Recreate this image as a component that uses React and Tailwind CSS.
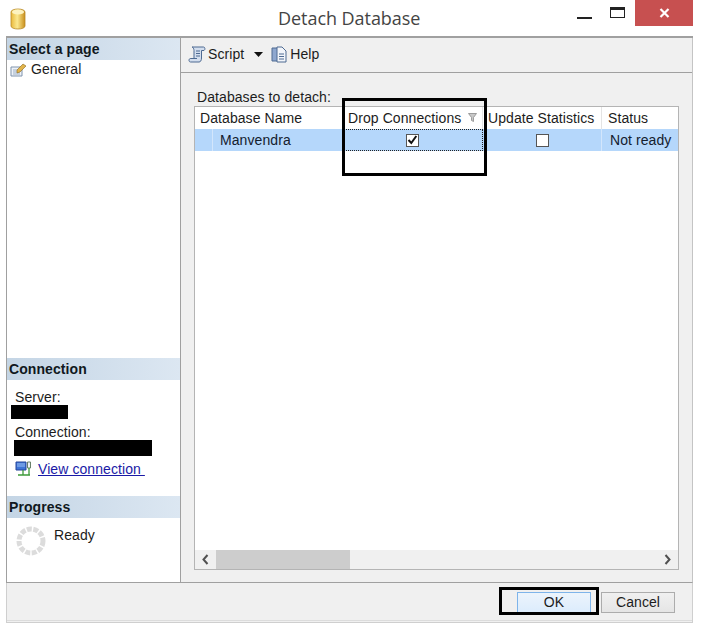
import React from "react";

const font = { fontFamily: '"Liberation Sans", Arial, sans-serif' };

const SectionHead = ({ children }) => (
  <div className="h-[22px] flex items-center pl-[2px] text-[14px] font-bold text-[#101820] bg-gradient-to-r from-[#c4d5e5] to-[#dce7f2]">
    {children}
  </div>
);

const DbIcon = () => (
  <svg width="16" height="22" viewBox="0 0 16 22">
    <defs>
      <linearGradient id="db" x1="0" x2="1" y1="0" y2="0">
        <stop offset="0" stopColor="#e9b93c" />
        <stop offset="0.45" stopColor="#fbe88e" />
        <stop offset="1" stopColor="#c98f1c" />
      </linearGradient>
    </defs>
    <path d="M1 4c0-4 14-4 14 0v14c0 4-14 4-14 0z" fill="url(#db)" stroke="#b98a2a" strokeWidth="0.8" />
    <ellipse cx="8" cy="4" rx="6" ry="2.4" fill="#fdf3c0" />
  </svg>
);

const PageIcon = () => (
  <svg width="17" height="15" viewBox="0 0 17 15">
    <path d="M1 5h11v9H1z" fill="#eef2f8" stroke="#7e93ad" />
    <path d="M3 8h7M3 10h7M3 12h7" stroke="#9db0c6" />
    <path d="M7 8l6-6 3 2-6 6-3 1z" fill="#e2b44a" stroke="#8a6a20" strokeWidth="0.6" />
  </svg>
);

const ScriptIcon = () => (
  <svg width="18" height="17" viewBox="0 0 18 17" fill="#d3deee" stroke="#4e6a92">
    <path d="M4 1h11.500c1.500 0 2 2.500 0.500 3.500H13.500V12c0 2.500-1 4-2.500 4H2.500C0.500 16 0.500 12.500 2.500 12.500H6V4.500C6 3 5 1 4 1z" />
    <path d="M8 5h4M8 7.500h4M8 10h4M2.500 12.500h6.500" fill="none" />
  </svg>
);

const HelpIcon = () => (
  <svg width="16" height="17" viewBox="0 0 16 17">
    <path d="M1 2h6v13H1z" fill="#8ea7cf" stroke="#4e6a92" />
    <path d="M6 1h5l4 4v11H6z" fill="#f2f5fa" stroke="#4e6a92" />
    <path d="M8 8h5M8 10.500h5M8 13h5" stroke="#4e6a92" />
  </svg>
);

const ConnIcon = () => (
  <svg width="17" height="16" viewBox="0 0 17 16">
    <path d="M1 1h10v8H1z" fill="#3f74d6" stroke="#25459a" />
    <path d="M2 3h8M2 5h8" stroke="#9cc0f2" />
    <path d="M12.500 1h3v6h-3z" fill="#eef2f6" stroke="#68806a" />
    <path d="M3 14h12M8 9v5M14 7v7" stroke="#3e9a3a" strokeWidth="1.3" fill="none" />
  </svg>
);

const Spinner = () => (
  <svg width="30" height="30" viewBox="0 0 30 30" fill="none">
    <circle cx="15" cy="15" r="12" stroke="#dcdcdc" strokeWidth="5" strokeDasharray="5 1.500" />
  </svg>
);

export default function App() {
  return (
    <div className="relative w-[703px] h-[625px] overflow-hidden bg-white text-[14px] tracking-[0.08px] text-[#1c1c1c]" style={font}>
      {/* title bar */}
      <div className="h-[36px] flex items-start">
        <div className="ml-[10px] mt-[8px]">
          <DbIcon />
        </div>
        <div
          className="ml-[252px] mt-[6px] w-[142px] whitespace-nowrap text-[18px] leading-[24px] tracking-[-0.05px] text-[#444]"
          style={{ fontFamily: '"Open Sans", sans-serif' }}
        >
          Detach Database
        </div>
        <div className="ml-[157px] mt-[17px] w-[15px] h-[2px] bg-[#222]" />
        <div className="ml-[18px] mt-[7px] w-[15px] h-[11px] border border-[#222] border-t-[3px]" />
        <div className="ml-[10px] w-[58px] h-[26px] bg-[#c75050] flex items-center justify-center text-white">
          <svg width="11" height="10" viewBox="0 0 11 10">
            <path d="M1.500 1l8 8M9.500 1l-8 8" stroke="#fff" strokeWidth="2.200" />
          </svg>
        </div>
      </div>

      {/* dialog body */}
      <div className="ml-[6px] w-[687px] h-[587px] flex flex-col bg-[#f0f0f0] border-t-2 border-[#a0a0a0]">
        <div className="h-[545px] flex border-b border-x border-b-[#a0a0a0] border-l-[#a0a0a0] border-r-[#c4c4c4]">
          {/* sidebar */}
          <div className="w-[174px] flex flex-col bg-white border-r border-[#a0a0a0]">
            <SectionHead>Select a page</SectionHead>
            <div className="h-[298px] pl-[3px]">
              <div className="flex items-center h-[18px] gap-[4px]">
                <PageIcon />
                <span className="leading-[18px]">General</span>
              </div>
            </div>
            <SectionHead>Connection</SectionHead>
            <div className="h-[116px] pl-[8px] pt-[9px]">
              <div className="leading-[16px]">Server:</div>
              <div className="-ml-[4px] w-[57px] h-[14px] bg-black" />
              <div className="mt-[5px] leading-[16px]">Connection:</div>
              <div className="-ml-[1px] w-[138px] h-[16px] bg-black" />
              <div className="flex items-center gap-[6px] mt-[4px]">
                <ConnIcon />
                <a className="text-[#1a1aa6] underline leading-[18px] whitespace-pre">View connection </a>
              </div>
            </div>
            <SectionHead>Progress</SectionHead>
            <div className="flex-1 pl-[9px] pt-[8px] flex items-start gap-[8px]">
              <Spinner />
              <span className="leading-[18px]">Ready</span>
            </div>
          </div>

          {/* main */}
          <div className="flex-1 flex flex-col">
            <div className="h-[35px] flex items-center pl-[7px] pb-[2px] border-b border-[#a0a0a0]">
              <ScriptIcon />
              <span className="ml-[2px]">Script</span>
              <svg className="ml-[10px]" width="9" height="5" viewBox="0 0 9 5">
                <path d="M0 0h9L4.500 5z" fill="#111" />
              </svg>
              <span className="ml-[8px] flex"><HelpIcon /></span>
              <span className="ml-[3px]">Help</span>
            </div>
            <div className="flex-1 px-[13px] pt-[16px] bg-[#f0f0f0] flex flex-col">
              <div className="leading-[17px] ml-[3px]">Databases to detach:</div>
              <div className="w-[485px] h-[464px] flex flex-col bg-white border border-[#b4b4b4]">
                <div className="h-[22px] flex leading-[22px] bg-white shrink-0">
                  <div className="w-[148px] pl-[5px] border-r border-[#e4e4e4]">Database Name</div>
                  <div className="w-[140px] pl-[5px] pr-[5px] flex justify-between border-r border-[#e4e4e4]">
                    <span>Drop Connections</span>
                    <svg className="mt-[6px]" width="9" height="9" viewBox="0 0 9 9">
                      <path d="M0.500 0.500h8L5.500 4.500v4l-2-1v-3z" fill="#c8c8c8" stroke="#8a8a8a" strokeWidth="0.8" />
                    </svg>
                  </div>
                  <div className="w-[119px] pl-[5px] whitespace-nowrap border-r border-[#e4e4e4]">Update Statistics</div>
                  <div className="flex-1 pl-[6px]">Status</div>
                </div>
                <div className="h-[22px] flex leading-[22px] bg-[#b5d7fb] shrink-0 text-[#14202e]">
                  <div className="w-[18px] border-r border-[#d3e6fc]" />
                  <div className="w-[130px] pl-[7px]">Manvendra</div>
                  <div className="w-[140px] flex items-center justify-center pr-[2px] border border-dotted border-[#222]">
                    <span className="w-[13px] h-[13px] bg-white border border-[#555] flex items-center justify-center">
                      <svg width="11" height="10" viewBox="0 0 11 10">
                        <path d="M1.500 5l2.800 3 5-7" fill="none" stroke="#111" strokeWidth="2" />
                      </svg>
                    </span>
                  </div>
                  <div className="w-[119px] flex items-center justify-center border-r border-[#d3e6fc]">
                    <span className="w-[13px] h-[13px] bg-white border border-[#555]" />
                  </div>
                  <div className="flex-1 pl-[8px] whitespace-nowrap overflow-hidden">Not ready</div>
                </div>
                <div className="flex-1" />
                <div className="h-[19px] flex items-center bg-[#f0f0f0] shrink-0">
                  <div className="w-[21px] flex justify-center">
                    <svg width="7" height="11" viewBox="0 0 7 11">
                      <path d="M5.500 1L1.500 5.500l4 4.500" fill="none" stroke="#505050" strokeWidth="2" />
                    </svg>
                  </div>
                  <div className="w-[134px] h-full bg-[#cdcdcd]" />
                  <div className="flex-1" />
                  <div className="w-[21px] flex justify-center">
                    <svg width="7" height="11" viewBox="0 0 7 11">
                      <path d="M1.500 1l4 4.500-4 4.500" fill="none" stroke="#505050" strokeWidth="2" />
                    </svg>
                  </div>
                </div>
              </div>
            </div>
          </div>
        </div>

        {/* footer */}
        <div className="flex-1 flex flex-col border-x border-b border-[#cfcfcf]">
          <div className="flex-1 flex justify-end items-start pt-[9px] pr-[17px] gap-[10px] border-b border-[#dcdcdc]">
            <button className="w-[74px] h-[21px] text-center leading-[19px] border border-[#7eb4ea] bg-gradient-to-b from-[#ecf4fc] to-[#dcecfc]">
              OK
            </button>
            <button className="w-[74px] h-[21px] text-center leading-[19px] border border-[#acacac] bg-gradient-to-b from-[#f0f0f0] to-[#e5e5e5]">
              Cancel
            </button>
          </div>
          <div className="h-[1px]" />
        </div>
      </div>

      {/* black annotation boxes drawn over the shot */}
      <div className="absolute left-[342px] top-[98px] w-[145px] h-[78px] border-[3px] border-black" />
      <div className="absolute left-[499px] top-[587px] w-[100px] h-[28px] border-[3px] border-black" />
    </div>
  );
}
